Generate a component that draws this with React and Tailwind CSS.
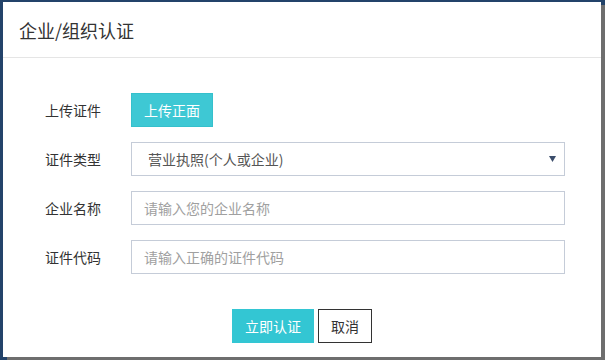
import React from "react";

export default function App() {
  const font = { fontFamily: '"Noto Sans CJK SC", "Noto Sans", sans-serif' };
  return (
    <div
      className="w-[605px] h-[360px] bg-[#23436a] overflow-hidden pt-[2px] pl-[3px]"
      style={font}
    >
      <div className="w-[598px] h-[355px] bg-white shadow-[4px_3px_0_#6e6e6e] flex flex-col">
        <div className="h-[56px] border-b border-[#e5e5e5] flex items-center pl-[16px]">
          <span className="text-[18px] text-[#333] leading-none">企业/组织认证</span>
        </div>
        <div className="flex flex-col gap-[15px] pt-[35px] pl-[42px] pr-[36px]">
          <div className="flex items-center h-[34px]">
            <div className="w-[86px] text-[14px] text-[#333]">上传证件</div>
            <button className="h-[34px] w-[82px] bg-[#3ec8d4] border border-[#35c0cc] text-white text-[14px]">
              上传正面
            </button>
          </div>
          <div className="flex items-center h-[34px]">
            <div className="w-[86px] text-[14px] text-[#333]">证件类型</div>
            <div className="flex-1 h-[34px] border border-[#c5ccd8] flex items-center justify-between pl-[16px] pr-[7px]">
              <span className="text-[14px] text-[#555]">营业执照(个人或企业)</span>
              <svg width="7" height="6" viewBox="0 0 7 6" className="mr-[1px]">
                <path d="M0 0H7L3.5 6Z" fill="#3b4d6b" />
              </svg>
            </div>
          </div>
          <div className="flex items-center h-[34px]">
            <div className="w-[86px] text-[14px] text-[#333]">企业名称</div>
            <div className="flex-1 h-[34px] border border-[#c5ccd8] flex items-center pl-[12px]">
              <span className="text-[14px] text-[#a0a0a0]">请输入您的企业名称</span>
            </div>
          </div>
          <div className="flex items-center h-[34px]">
            <div className="w-[86px] text-[14px] text-[#333]">证件代码</div>
            <div className="flex-1 h-[34px] border border-[#c5ccd8] flex items-center pl-[12px]">
              <span className="text-[14px] text-[#a0a0a0]">请输入正确的证件代码</span>
            </div>
          </div>
        </div>
        <div className="flex justify-center gap-[4px] mt-[35px]">
          <button className="h-[34px] w-[82px] bg-[#33c6d3] text-white text-[14px]">立即认证</button>
          <button className="h-[34px] w-[54px] bg-white border border-[#333] text-[#333] text-[14px]">取消</button>
        </div>
      </div>
    </div>
  );
}
